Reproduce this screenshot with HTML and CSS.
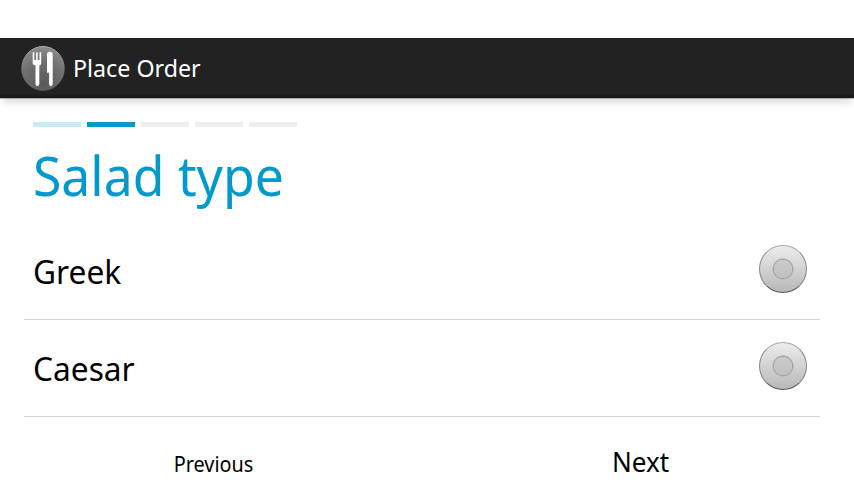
FILE: index.html
```html
<!DOCTYPE html>
<html lang="en">
<head>
<meta charset="utf-8">
<title>Place Order</title>
<link rel="stylesheet" href="styles.css">
</head>
<body>
<header class="bar">
<svg class="logo" width="44" height="46" viewBox="0 0 44 46">
<defs>
<radialGradient id="disc" cx=".5" cy=".85" r=".85"><stop offset="0" stop-color="#595959"/><stop offset=".6" stop-color="#707070"/><stop offset="1" stop-color="#8c8c8c"/></radialGradient>
<linearGradient id="rim" x1="0" y1="0" x2="0" y2="1"><stop offset="0" stop-color="#b4b4b4"/><stop offset=".35" stop-color="#858585"/><stop offset="1" stop-color="#555"/></linearGradient>
</defs>
<ellipse cx="22" cy="22.5" rx="21.2" ry="22" fill="url(#disc)" stroke="url(#rim)"/>
<path fill="#fff" d="M11.700 6.500q.9-1.200 1.600 0V14h1.800V6.500q.8-1.200 1.600 0V14h1.800V6.500q.8-1.200 1.700 0V17.500q0 1.500-1.900 2V38.500q-1.900 3.600-3.800 0V19.500q-2.800-.5-2.800-2z"/>
<path fill="#fff" d="M26 8.500q0-2.700 2.800-2.700 2.900 0 2.900 2.700V38.500q-1.800 3.600-3.600 0V26.800H26z"/>
</svg>
<h1 class="bar-title">Place Order</h1>
</header>
<main class="page">
<div class="steps"><i class="step done"></i><i class="step current"></i><i class="step"></i><i class="step"></i><i class="step"></i></div>
<h2 class="title">Salad type</h2>
<ul class="options">
<li class="option"><span class="label">Greek</span><i class="radio"></i></li>
<li class="option"><span class="label">Caesar</span><i class="radio"></i></li>
</ul>
</main>
<footer class="nav"><span class="prev">Previous</span><span class="next">Next</span></footer>
</body>
</html>
```
FILE: styles.css
```css
* { box-sizing: border-box; }
body { margin: 0; padding-top: 38px; height: 480px; overflow: hidden; background: #fff; color: #000; font-family: "Noto Sans", "Open Sans", sans-serif; }
.bar { height: 60px; display: flex; align-items: center; padding: 3px 0 0 21px; background: linear-gradient(#222 56px, #191919 58px); box-shadow: 0 1px 0 rgba(0,0,0,.25), 0 7px 8px -3px rgba(0,0,0,.16); }
.logo { margin-bottom: 1px; }
.bar-title { margin: 0 0 4px 8px; color: #fff; font-size: 24px; line-height: 32px; font-weight: 400; transform: scaleX(.968); transform-origin: left; }
.page { padding: 24px 34px 0 24px; }
.steps { display: flex; gap: 6px; padding-left: 9px; }
.step { width: 48px; height: 5px; background: #eee; }
.done { background: #c5eaf8; }
.current { background: #0099cc; }
.title { margin: 0 0 0 9px; height: 96px; line-height: 97px; font-size: 54px; font-weight: 400; color: #0099cc; transform: scaleX(.957); transform-origin: left; }
.options { margin: 0; padding: 0; list-style: none; }
.option { height: 97px; display: flex; align-items: center; justify-content: space-between; padding: 0 13px 0 9px; font-size: 33px; border-bottom: 1px solid #d5d5d5; }
.label { transform: scaleX(.96); transform-origin: left; }
.radio { width: 48px; height: 48px; margin-bottom: 4px; border: 1px solid; border-color: #aaa #858585 #555; border-radius: 50%; background: radial-gradient(circle, rgba(185,185,185,.5) 9px, #a0a0a0 9.5px, #b0b0b0 10px, transparent 11px), linear-gradient(#ececec, #b8b8b8); }
.nav { display: flex; height: 39px; margin-top: 24px; overflow: hidden; }
.nav span { flex: 1; text-align: center; }
.prev { font-size: 21px; line-height: 46px; transform: scaleX(.945); }
.next { font-size: 27px; line-height: 42px; transform: scaleX(.965); }
```
